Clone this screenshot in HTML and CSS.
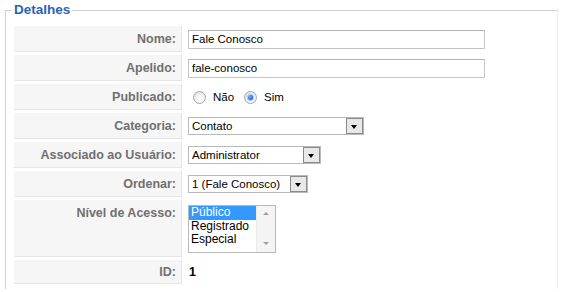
FILE: index.html
```html
<!DOCTYPE html>
<html lang="pt">
<head>
    <meta charset="UTF-8">
    <title>Detalhes</title>
    <link rel="stylesheet" href="styles.css">
</head>
<body>
    <fieldset class="details">
        <legend>Detalhes</legend>
        <table class="admintable">
            <tr>
                <td class="key">Nome:</td>
                <td><div class="text-input wide">Fale Conosco</div></td>
            </tr>
            <tr>
                <td class="key">Apelido:</td>
                <td><div class="text-input wide">fale-conosco</div></td>
            </tr>
            <tr>
                <td class="key">Publicado:</td>
                <td>
                    <div class="radios">
                        <span class="radio"></span><span class="radio-label">Não</span>
                        <span class="radio checked"></span><span class="radio-label">Sim</span>
                    </div>
                </td>
            </tr>
            <tr>
                <td class="key">Categoria:</td>
                <td><div class="select cat"><span class="select-value">Contato</span><span class="select-btn"></span></div></td>
            </tr>
            <tr>
                <td class="key">Associado ao Usuário:</td>
                <td><div class="select user"><span class="select-value">Administrator</span><span class="select-btn"></span></div></td>
            </tr>
            <tr>
                <td class="key">Ordenar:</td>
                <td><div class="select order"><span class="select-value">1 (Fale Conosco)</span><span class="select-btn"></span></div></td>
            </tr>
            <tr class="tall">
                <td class="key">Nível de Acesso:</td>
                <td>
                    <div class="listbox">
                        <div class="options">
                            <div class="option selected">Público</div>
                            <div class="option">Registrado</div>
                            <div class="option">Especial</div>
                        </div>
                        <div class="scrollbar">
                            <span class="arrow up"></span>
                            <span class="arrow down"></span>
                        </div>
                    </div>
                </td>
            </tr>
            <tr class="short">
                <td class="key">ID:</td>
                <td><strong class="id">1</strong></td>
            </tr>
        </table>
    </fieldset>
</body>
</html>
```

FILE: styles.css
```css
* {
    box-sizing: border-box;
}
body {
    margin: 0;
    background-color: #fff;
    font-family: "Liberation Sans", Arial, sans-serif;
    font-size: 11.5px;
    color: #000;
    height: 292px;
    overflow: hidden;
}
.details {
    margin: 1px 15px 0 5px;
    padding: 7px 6px 2px 6px;
    border: 1px solid #d0d0d0;
    border-right-color: #f0f0f0;
    border-bottom: 0;
}
.details legend {
    padding: 0 2px;
    font-size: 13.5px;
    line-height: 18px;
    font-weight: bold;
    color: #2b63b6;
}
.admintable {
    border-spacing: 2px 3px;
    margin: -3px 0 0 0;
}
.admintable td {
    padding: 3px 4px;
    vertical-align: middle;
}
.admintable td.key {
    width: 168px;
    height: 26px;
    padding: 3px 5px 3px 5px;
    background-color: #f6f6f6;
    border-bottom: 1px solid #e6e6e6;
    border-right: 1px solid #e6e6e6;
    text-align: right;
    font-size: 12.5px;
    font-weight: bold;
    color: #707070;
}
.admintable tr.tall td.key {
    height: 57px;
    vertical-align: top;
    padding-top: 6px;
}
.admintable tr.short td.key {
    height: 24px;
}
.text-input {
    height: 19px;
    border: 1px solid #c4c4c4;
    border-top-color: #b4b4b4;
    padding: 0 3px;
    line-height: 17px;
    white-space: nowrap;
}
.text-input.wide {
    width: 297px;
}
.radios {
    display: flex;
    align-items: center;
    padding-left: 5px;
}
.radio {
    width: 13px;
    height: 13px;
    border-radius: 50%;
    border: 1px solid #a8a8a8;
    background: radial-gradient(circle at 60% 65%, #fff 0, #f2f2f2 45%, #d4d4d4 100%);
    position: relative;
}
.radio.checked::after {
    content: "";
    position: absolute;
    left: 3px;
    top: 3px;
    width: 5px;
    height: 5px;
    border-radius: 50%;
    background: radial-gradient(circle at 40% 40%, #7fb4ff 0, #2a6ae0 60%, #1b4fb8 100%);
    box-shadow: 0 0 1px 1px #9cc3f5;
}
.radio-label {
    margin: 0 10px 0 7px;
}
.select {
    display: flex;
    align-items: stretch;
    height: 18px;
    border: 1px solid #b9b9b9;
    background-color: #fff;
}
.select-value {
    flex: 1;
    padding: 0 3px;
    line-height: 16px;
    white-space: nowrap;
    overflow: hidden;
}
.select-btn {
    width: 17px;
    border: 1px solid #8a8a8a;
    background-color: #e8e8e8;
    position: relative;
}
.select-btn::after {
    content: "";
    position: absolute;
    left: 4px;
    top: 6px;
    border-left: 3.5px solid transparent;
    border-right: 3.5px solid transparent;
    border-top: 4px solid #000;
}
.select.cat {
    width: 176px;
}
.select.user {
    width: 133px;
}
.select.order {
    width: 120px;
}
.listbox {
    display: flex;
    width: 88px;
    height: 48px;
    margin-top: 1px;
    border: 1px solid #b9b9b9;
    background-color: #fff;
}
.options {
    flex: 1;
}
.option {
    height: 13.5px;
    line-height: 13.5px;
    padding: 0 2px;
    font-size: 12px;
    white-space: nowrap;
}
.option.selected {
    background-color: #3399ff;
    color: #fff;
}
.scrollbar {
    width: 19px;
    background-color: #f4f4f4;
    border-left: 1px solid #ececec;
    display: flex;
    flex-direction: column;
    justify-content: space-between;
    align-items: center;
    padding: 6px 0 7px;
}
.arrow {
    width: 0;
    height: 0;
    border-left: 3.5px solid transparent;
    border-right: 3.5px solid transparent;
}
.arrow.up {
    border-bottom: 3.5px solid #a0a0a0;
}
.arrow.down {
    border-top: 3.5px solid #a0a0a0;
}
.id {
    padding-left: 1px;
    font-size: 12.5px;
}
```
